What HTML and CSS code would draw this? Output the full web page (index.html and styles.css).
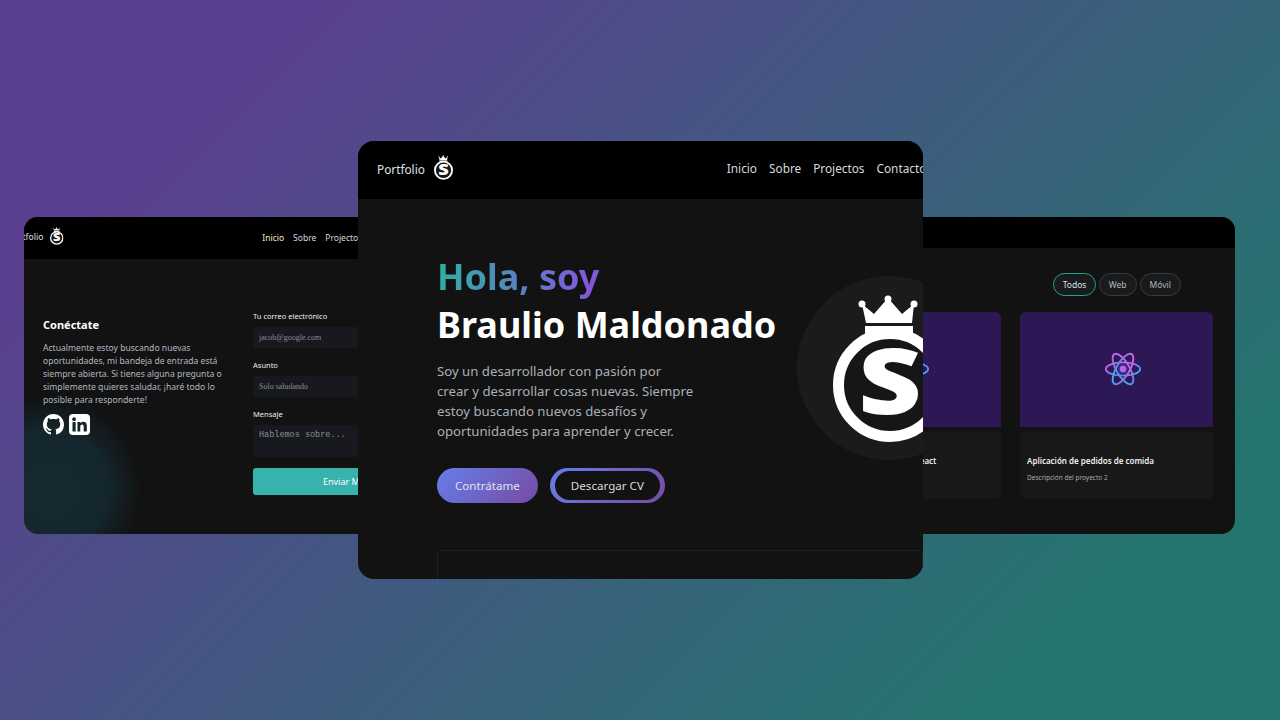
FILE: index.html
```html
<!DOCTYPE html>
<html lang="es">
<head>
<meta charset="utf-8">
<title>Portfolio</title>
<link rel="stylesheet" href="styles.css">
</head>
<body>
<svg class="sprite" aria-hidden="true">
  <defs>
    <linearGradient id="atom" gradientUnits="userSpaceOnUse" x1="-4" y1="-14" x2="8" y2="14">
      <stop offset="0" stop-color="#e25fe6"/>
      <stop offset=".4" stop-color="#a070e8"/>
      <stop offset=".65" stop-color="#5a8aea"/>
      <stop offset="1" stop-color="#10e0f0"/>
    </linearGradient>
    <symbol id="logo" viewBox="0 0 114 147">
      <path fill="#fff" d="M29 9 41 19 55 3 69 19 81 9 79 28H33Z"/>
      <circle cx="29" cy="9" r="3.5" fill="#fff"/>
      <circle cx="55" cy="4" r="3.5" fill="#fff"/>
      <circle cx="81" cy="9" r="3.5" fill="#fff"/>
      <rect x="32" y="31" width="48" height="8" fill="#fff"/>
      <circle cx="57" cy="90" r="51.5" fill="#161616" stroke="#fff" stroke-width="11"/>
      <text transform="translate(57 119) scale(1.22 1)" text-anchor="middle" class="logo-s">S</text>
    </symbol>
    <symbol id="react" viewBox="-20 -18 40 36">
      <g fill="none" stroke="url(#atom)" stroke-width="2">
        <ellipse rx="18" ry="7"/>
        <ellipse rx="18" ry="7" transform="rotate(60)"/>
        <ellipse rx="18" ry="7" transform="rotate(120)"/>
      </g>
      <circle r="5.5" fill="#4a2488"/>
      <circle r="3.4" fill="#b06ae8"/>
    </symbol>
  </defs>
</svg>

<main class="stage">
  <section class="window window-left">
    <header class="nav nav-left">
      <div class="brand brand-left">
        <span>Portfolio</span>
        <svg class="logo-left"><use href="#logo"/></svg>
      </div>
      <nav class="links links-left">
        <a class="current">Inicio</a><a>Sobre</a><a>Projectos</a><a>Contacto</a>
      </nav>
    </header>
    <div class="contact">
      <div class="contact-text">
        <h2>Conéctate</h2>
        <p>Actualmente estoy buscando nuevas oportunidades, mi bandeja de entrada está siempre abierta. Si tienes alguna pregunta o simplemente quieres saludar, ¡haré todo lo posible para responderte!</p>
        <div class="socials">
          <svg class="social" viewBox="0 0 16 16"><path fill="#fff" d="M8 0C3.58 0 0 3.58 0 8c0 3.54 2.29 6.53 5.47 7.59.4.07.55-.17.55-.38 0-.19-.01-.82-.01-1.49-2.01.37-2.53-.49-2.69-.94-.09-.23-.48-.94-.82-1.13-.28-.15-.68-.52-.01-.53.63-.01 1.08.58 1.23.82.72 1.21 1.87.87 2.33.66.07-.52.28-.87.51-1.07-1.78-.2-3.64-.89-3.64-3.95 0-.87.31-1.59.82-2.15-.08-.2-.36-1.02.08-2.12 0 0 .67-.21 2.2.82.64-.18 1.32-.27 2-.27.68 0 1.36.09 2 .27 1.53-1.04 2.2-.82 2.2-.82.44 1.1.16 1.92.08 2.12.51.56.82 1.27.82 2.15 0 3.07-1.87 3.75-3.65 3.95.29.25.54.73.54 1.48 0 1.07-.01 1.93-.01 2.2 0 .21.15.46.55.38A8.013 8.013 0 0016 8c0-4.42-3.58-8-8-8z"/></svg>
          <svg class="social" viewBox="0 0 24 24"><rect width="24" height="24" rx="4.5" fill="#fff"/><rect x="4" y="9.2" width="3.6" height="10.8" fill="#14242b"/><circle cx="5.8" cy="5.9" r="2.1" fill="#14242b"/><path fill="#14242b" d="M9.7 9.2h3.4v1.5c.6-1 1.8-1.8 3.3-1.8 3 0 4 2 4 4.9V20h-3.6v-5.4c0-1.4-.4-2.6-1.8-2.6s-2.1 1.1-2.1 2.6V20H9.7z"/></svg>
        </div>
      </div>
      <form class="form">
        <label>Tu correo electrónico</label>
        <div class="field field-serif">jacob@google.com</div>
        <label>Asunto</label>
        <div class="field field-serif">Solo saludando</div>
        <label>Mensaje</label>
        <div class="field field-area">Hablemos sobre...</div>
        <div class="send">Enviar Mensaje</div>
      </form>
    </div>
  </section>

  <section class="window window-right">
    <header class="nav nav-right"></header>
    <div class="projects">
      <div class="tabs">
        <span class="tab tab-on">Todos</span><span class="tab">Web</span><span class="tab">Móvil</span>
      </div>
      <div class="cards">
        <article class="card">
          <div class="card-img"><svg class="react"><use href="#react"/></svg></div>
          <div class="card-body"><h3>Mi Sitio de Portafolio con React</h3><p>Descripción del proyecto 1</p></div>
        </article>
        <article class="card">
          <div class="card-img"><svg class="react"><use href="#react"/></svg></div>
          <div class="card-body"><h3>Aplicación de pedidos de comida</h3><p>Descripción del proyecto 2</p></div>
        </article>
      </div>
    </div>
  </section>

  <section class="window window-main">
    <header class="nav nav-main">
      <div class="brand brand-main">
        <span>Portfolio</span>
        <svg class="logo-main"><use href="#logo"/></svg>
      </div>
      <nav class="links links-main">
        <a>Inicio</a><a>Sobre</a><a>Projectos</a><a>Contacto</a>
      </nav>
    </header>
    <div class="hero">
      <div class="hero-text">
        <h1><span class="grad">Hola, soy</span><br>Braulio Maldonado</h1>
        <p>Soy un desarrollador con pasión por crear y desarrollar cosas nuevas. Siempre estoy buscando nuevos desafíos y oportunidades para aprender y crecer.</p>
        <div class="actions">
          <a class="btn btn-fill">Contrátame</a>
          <a class="btn btn-line"><span>Descargar CV</span></a>
        </div>
      </div>
      <div class="avatar"><svg class="logo-big"><use href="#logo"/></svg></div>
    </div>
    <div class="stats"></div>
  </section>
</main>
</body>
</html>
```

FILE: styles.css
```css
* { box-sizing: border-box; }
html, body { margin: 0; height: 100%; }
body {
  overflow: hidden;
  font-family: "Noto Sans", "Open Sans", sans-serif;
  background: linear-gradient(135deg, #5b3f90 15%, #24756e 85%);
}
.sprite { position: absolute; width: 0; height: 0; }
.logo-s { font-family: "Noto Sans", sans-serif; font-weight: 900; font-size: 90px; fill: #fff; }
.stage { position: relative; width: 1280px; height: 720px; }
h1, h2, h3, p { margin: 0; }

.window { position: absolute; background: #121212; overflow: hidden; }
.window-left { left: 24px; top: 217px; width: 460px; height: 317px; border-radius: 14px;
  background: radial-gradient(circle at 25px 272px, #162a32 0, #14262d 58px, #121212 92px); }
.window-right { left: 788px; top: 217px; width: 447px; height: 317px; border-radius: 14px; }
.window-main { left: 358px; top: 141px; width: 565px; height: 438px; border-radius: 16px; }

.nav { background: #000; display: flex; align-items: center; white-space: nowrap; }
.nav-left { height: 42px; padding-bottom: 2px; }
.nav-right { height: 31px; }
.nav-main { height: 58px; padding: 0 0 3px 19px; }

.brand { display: flex; align-items: center; color: #dfe3e8; }
.brand-left { margin-left: -15.5px; gap: 7px; font-size: 8.6px; }
.brand-main { gap: 9px; font-size: 11.8px; }
.logo-left { width: 13.5px; height: 18px; margin-top: -2px; }
.logo-main { width: 19px; height: 25px; margin-top: -2px; }

.links { display: flex; color: #d6dade; }
.links-left { margin-left: 198.5px; gap: 9px; font-size: 8.5px; }
.links-left .current { color: #f5e9cf; }
.links-main { margin-left: 274px; margin-top: -1px; gap: 12px; font-size: 11.8px; }

/* contact window */
.contact { display: flex; padding: 53px 0 0 19px; gap: 20px; }
.contact-text { width: 190px; flex-shrink: 0; padding-top: 5px; }
.contact-text h2 { color: #fff; font-size: 11px; font-weight: 700; line-height: 15px; }
.contact-text p { color: #b0b9c0; font-size: 8.6px; line-height: 13px; margin-top: 10px; }
.socials { display: flex; gap: 5px; margin-top: 7px; }
.social { width: 21px; height: 21px; }
.form { width: 204px; display: flex; flex-direction: column; }
.form label { color: #eceef0; font-size: 7.5px; line-height: 9px; font-weight: 400; margin-bottom: 6px; }
.field { background: #18191e; border-radius: 3px; height: 21px; padding: 0 6px; margin-bottom: 13px;
  display: flex; align-items: center; color: #8a8f96; }
.field-serif { font-family: "Liberation Serif", serif; font-size: 8px; }
.field-area { height: 32px; margin-bottom: 11px; align-items: flex-start; padding-top: 5px;
  font-family: "Liberation Mono", monospace; font-size: 8.5px; }
.send { background: #38b2ac; color: #fff; height: 27px; border-radius: 3px; font-size: 9px;
  display: flex; align-items: center; justify-content: center; }

/* projects window */
.projects { padding: 25px 22px 0 20px; }
.tabs { display: flex; justify-content: flex-end; gap: 3px; padding-right: 32px; }
.tab { height: 23px; border: 1px solid #3a3b3f; border-radius: 12px; background: #191a1b; color: #b4b8bc;
  font-size: 8.5px; display: flex; align-items: center; padding: 0 9px 1px; }
.tab-on { border-color: #22a093; color: #dfe3e6; padding: 0 8.5px 1px; }
.cards { display: grid; grid-template-columns: 193px 193px; gap: 19px; margin-top: 16px; }
.card-img { height: 115px; background: #2e1755; border-radius: 6px 6px 0 0; display: flex;
  align-items: center; justify-content: center; padding-left: 12px; margin-bottom: 5px; }
.react { width: 38px; height: 36px; margin-top: -1px; }
.card-body { height: 67px; background: #181818; border-radius: 0 0 6px 6px; padding: 23px 7px 0; }
.card-body h3 { color: #eef0f2; font-size: 8px; font-weight: 600; line-height: 12px; white-space: nowrap; }
.card-body p { color: #a3abb2; font-size: 6.5px; line-height: 10px; margin-top: 6px; white-space: nowrap; }

/* main window */
.hero { display: flex; padding: 54px 0 0 79px; }
.hero-text { width: 360px; flex-shrink: 0; }
.hero h1 { color: #fff; font-size: 36px; line-height: 48px; font-weight: 700; white-space: nowrap; }
.grad { background: linear-gradient(90deg, #33aca5 5%, #8158dc 95%); -webkit-background-clip: text; background-clip: text; color: transparent; }
.hero p { width: 258px; color: #a9b1b8; font-size: 13.2px; line-height: 20px; margin-top: 12px; }
.actions { display: flex; gap: 12px; margin-top: 27px; }
.btn { height: 35px; border-radius: 18px; background: linear-gradient(135deg, #667eea, #764ba2);
  color: #dfe3f0; font-size: 11.6px; display: flex; align-items: center; }
.btn-fill { padding: 0 18px; }
.btn-line { padding: 3px 5px; }
.btn-line span { height: 29px; background: #121212; border-radius: 15px; padding: 0 16px; display: flex;
  align-items: center; color: #d8dadc; }
.avatar { width: 184px; height: 184px; flex-shrink: 0; margin-top: 23px; border-radius: 50%;
  background: #1b1b1b; padding: 19px 0 0 36px; }
.logo-big { width: 114px; height: 147px; display: block; }
.stats { margin: 47px 0 0 79px; height: 60px; border: 1px solid #202126; border-radius: 4px; }
```
